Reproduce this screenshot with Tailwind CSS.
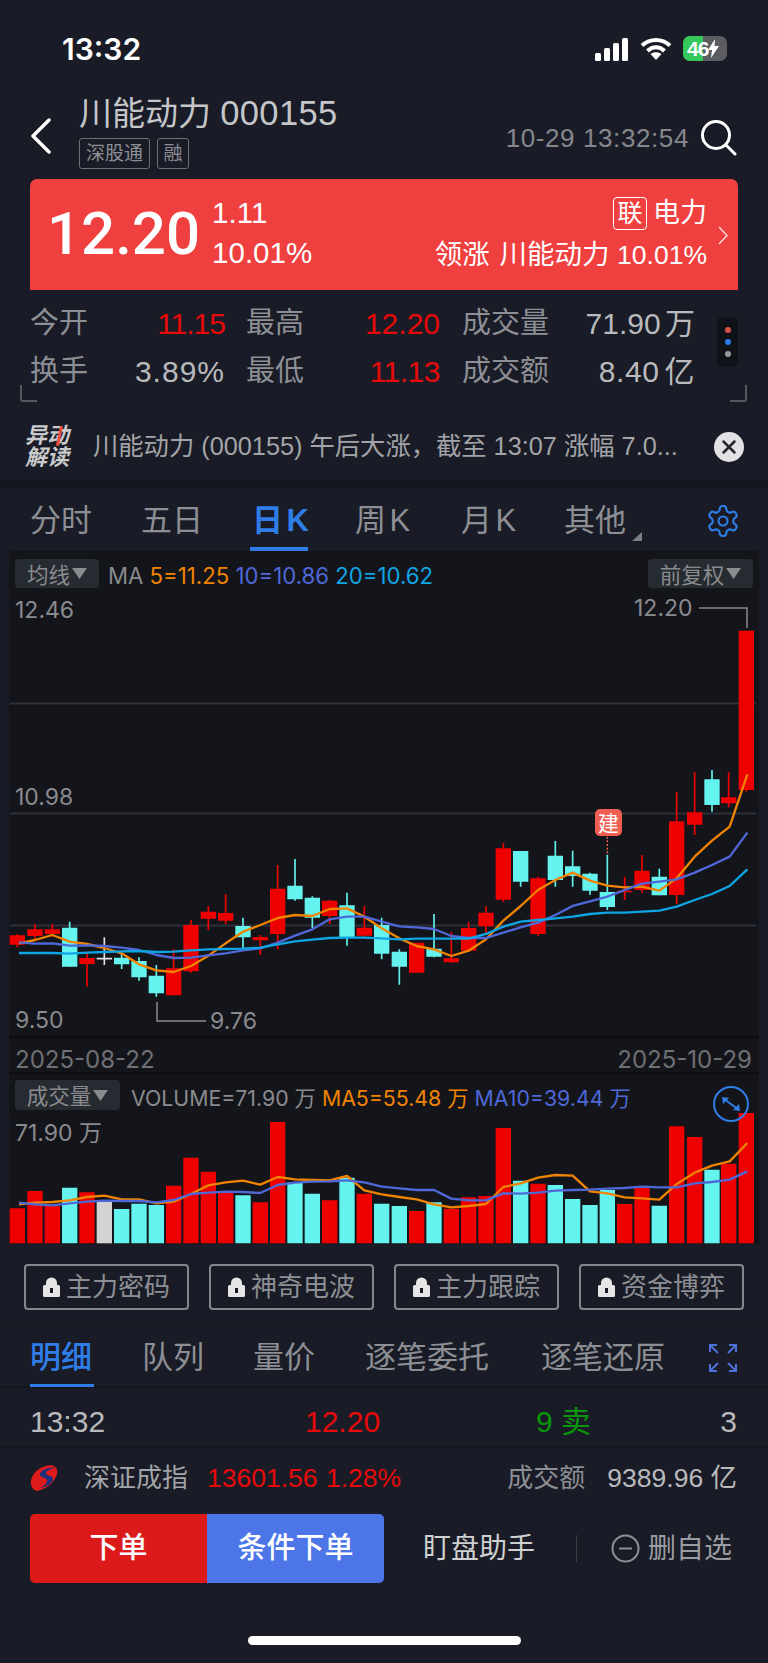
<!DOCTYPE html>
<html lang="zh"><head><meta charset="utf-8">
<script src="https://cdn.jsdelivr.net/npm/@tailwindcss/browser@4"></script>
</head>
<body class="m-0">
<div class="w-[768px] h-[1663px] overflow-hidden bg-[#191c26] text-[#8d8f95] font-['Liberation_Sans','Noto_Sans_CJK_SC',sans-serif] leading-none">

<!-- status bar -->
<div class="h-[92px] relative">
  <span class="absolute left-[62px] top-[33px] text-[30px] leading-[32px] font-semibold text-white font-['Inter','Liberation_Sans',sans-serif]">13:32</span>
  <div class="absolute left-[595px] top-[36px] flex items-center gap-[12px]">
    <svg width="33" height="24" viewBox="0 0 33 24" fill="#fff"><rect x="0" y="16" width="6" height="8" rx="1.5"/><rect x="9" y="11" width="6" height="13" rx="1.5"/><rect x="18" y="6" width="6" height="18" rx="1.5"/><rect x="27" y="1" width="6" height="23" rx="1.5"/></svg>
    <svg width="32" height="24" viewBox="0 0 32 24" fill="none" stroke="#fff" stroke-width="4"><path d="M2 8.5C10 1 22 1 30 8.5"/><path d="M7.500 14C12.500 9 19.500 9 24.500 14"/><path fill="#fff" stroke="none" d="M16 23 10.500 17C13.500 14.500 18.500 14.500 21.500 17Z"/></svg>
    <div class="relative w-[44px] h-[25px] rounded-[7px] bg-[#5b5d62] overflow-hidden ml-[-1px] flex items-center">
      <div class="absolute left-0 top-0 bottom-0 w-[20px] bg-[#34c759]"></div>
      <span class="relative ml-[4px] text-[21px] font-bold text-white tracking-[-1px] font-['Liberation_Sans',sans-serif]">46</span>
      <svg class="relative ml-[0px]" width="11" height="19" viewBox="0 0 11 19" fill="#fff"><path d="M7 0 0 11h4l-1 8 8-12H6.500Z"/></svg>
    </div>
  </div>
</div>

<!-- header -->
<div class="h-[87px] relative flex pl-[30px]">
  <svg class="mt-[26px]" width="22" height="36" viewBox="0 0 22 36" fill="none" stroke="#fff" stroke-width="3.500" stroke-linecap="round" stroke-linejoin="round"><path d="M19 2 3 18l16 16"/></svg>
  <div class="ml-[27px] flex flex-col">
    <div class="text-[33px] leading-[36px] mt-[3px] text-[#c5c6ca] whitespace-nowrap">川能动力 <span class="text-[34.500px] tracking-[.4px]">000155</span></div>
    <div class="flex gap-[7px] mt-[6px]">
      <span class="w-[71px] h-[31px] flex items-center justify-center border border-[#6e7076] rounded-[3px] text-[19px] text-[#8d8f95]">深股通</span>
      <span class="w-[32px] h-[31px] flex items-center justify-center border border-[#6e7076] rounded-[3px] text-[19px] text-[#8d8f95]">融</span>
    </div>
  </div>
  <div class="ml-auto mr-[31px] mt-[28px] flex items-center h-[36px]">
    <span class="text-[26px] tracking-[.6px] text-[#85878d]">10-29 13:32:54</span>
    <svg class="ml-[11px]" width="37" height="36" viewBox="0 0 37 36" fill="none" stroke="#fff" stroke-width="3" stroke-linecap="round"><circle cx="16" cy="15" r="13.500"/><path d="M26 25l9 9"/></svg>
  </div>
</div>

<!-- red price card -->
<div class="mx-[30px] h-[111px] bg-[#ef3f3f] rounded-t-[7px] relative flex text-white">
  <span class="ml-[17px] mt-[23px] text-[60px] leading-[64px] font-medium font-['Roboto',sans-serif]">12.20</span>
  <div class="ml-[12px] mt-[19px] flex flex-col gap-[10px] text-[29.500px] leading-[30px]">
    <span>1.11</span><span>10.01%</span>
  </div>
  <div class="ml-auto mr-[31px] mt-[18px] flex flex-col items-end">
    <div class="flex items-center h-[33px] text-[27px]">
      <span class="w-[34px] h-[33px] flex items-center justify-center border border-white rounded-[4px] mr-[6px] text-[25px]">联</span>电力
    </div>
    <div class="text-[27.500px] leading-[30px] mt-[10px] whitespace-nowrap"><span class="mr-[2px]">领涨</span> 川能动力 <span class="text-[26.500px]">10.01%</span></div>
  </div>
  <svg class="absolute left-[688px] top-[47px]" width="11" height="19" viewBox="0 0 11 19" fill="none" stroke="#fff" stroke-opacity=".8" stroke-width="1.500"><path d="M1 1l8 8.500L1 18"/></svg>
</div>

<!-- stats -->
<div class="relative h-[112px] pt-[10px] pl-[30px] text-[29px]">
  <div class="flex h-[48px] items-center">
    <div class="w-[195px] flex justify-between"><span>今开</span><span class="text-[#e60a0a] text-[30px] tracking-[-1px]">11.15</span></div>
    <div class="w-[194px] ml-[21px] flex justify-between"><span>最高</span><span class="text-[#e60a0a] text-[30px]">12.20</span></div>
    <div class="w-[233px] ml-[22px] flex justify-between"><span>成交量</span><span class="text-[#b9babd] text-[30px] [word-spacing:-4px]">71.90 万</span></div>
  </div>
  <div class="flex h-[48px] items-center">
    <div class="w-[195px] flex justify-between"><span>换手</span><span class="text-[#b9babd] text-[30px] tracking-[1px]">3.89%</span></div>
    <div class="w-[194px] ml-[21px] flex justify-between"><span>最低</span><span class="text-[#e60a0a] text-[30px] tracking-[-.5px]">11.13</span></div>
    <div class="w-[233px] ml-[22px] flex justify-between"><span>成交额</span><span class="text-[#b9babd] text-[30px] [word-spacing:-4px] tracking-[.6px]">8.40 亿</span></div>
  </div>
  <div class="absolute left-[717px] top-[27px] w-[21px] h-[50px] rounded-[5px] bg-[#101219] flex flex-col items-center justify-center gap-[6px]">
    <i class="w-[6px] h-[6px] rounded-full bg-[#d9503f]"></i><i class="w-[6px] h-[6px] rounded-full bg-[#2f7be8]"></i><i class="w-[6px] h-[6px] rounded-full bg-[#9a9a9a]"></i>
  </div>
  <div class="absolute left-[20px] top-[95px] w-[17px] h-[17px] border-l-2 border-b-2 border-[#56585f] rounded-bl-[3px]"></div>
  <div class="absolute left-[730px] top-[95px] w-[17px] h-[17px] border-r-2 border-b-2 border-[#56585f] rounded-br-[3px]"></div>
</div>

<!-- news strip -->
<div class="h-[78px] flex items-center pl-[25px] pt-[12px] relative">
  <div class="w-[48px] relative text-[22px] leading-[22px] font-bold italic text-[#c9cacc] flex flex-col whitespace-nowrap">
    <span>异动</span><span>解读</span>
    <i class="absolute left-[33px] top-[1px] w-[3px] h-[20px] bg-[#ef4b3f] rotate-[12deg]"></i>
  </div>
  <span class="ml-[20px] text-[25.300px] text-[#a3a4a8] whitespace-nowrap">川能动力 (000155) 午后大涨，截至 13:07 涨幅 7.0...</span>
  <svg class="absolute left-[714px] top-[30px]" width="30" height="30" viewBox="0 0 30 30"><circle cx="15" cy="15" r="15" fill="#e2e2e4"/><path d="M9.500 9.500l11 11M20.500 9.500l-11 11" stroke="#24262d" stroke-width="2.500" stroke-linecap="round"/></svg>
</div>
<div class="h-[8px] bg-[#14161d]"></div>

<!-- period tabs -->
<div class="h-[63px] relative flex items-center text-[31px] [word-spacing:-5px]">
  <span class="absolute left-[30px] top-[17px]">分时</span>
  <span class="absolute left-[141px] top-[17px]">五日</span>
  <span class="absolute left-[252px] top-[17px] text-[#2f7de6] font-bold">日 K</span>
  <i class="absolute left-[250px] top-[59px] w-[58px] h-[4px] bg-[#2f7de6]"></i>
  <span class="absolute left-[355px] top-[17px]">周 K</span>
  <span class="absolute left-[461px] top-[17px]">月 K</span>
  <span class="absolute left-[564px] top-[17px]">其他</span>
  <svg class="absolute left-[632px] top-[44px]" width="10" height="9" viewBox="0 0 10 9" fill="#7c7e84"><path d="M10 0v9H0Z"/></svg>
  <svg class="absolute left-[705px] top-[15px]" width="36" height="36" viewBox="0 0 24 24" fill="none" stroke="#2f7de6" stroke-width="1.400" stroke-linecap="round" stroke-linejoin="round"><path d="M12.220 2h-.44a2 2 0 0 0-2 2v.18a2 2 0 0 1-1 1.730l-.43.25a2 2 0 0 1-2 0l-.15-.08a2 2 0 0 0-2.730.73l-.22.38a2 2 0 0 0 .73 2.730l.15.1a2 2 0 0 1 1 1.720v.51a2 2 0 0 1-1 1.740l-.15.09a2 2 0 0 0-.73 2.730l.22.38a2 2 0 0 0 2.730.73l.15-.08a2 2 0 0 1 2 0l.43.25a2 2 0 0 1 1 1.730V20a2 2 0 0 0 2 2h.44a2 2 0 0 0 2-2v-.18a2 2 0 0 1 1-1.730l.43-.25a2 2 0 0 1 2 0l.15.08a2 2 0 0 0 2.730-.73l.22-.39a2 2 0 0 0-.73-2.730l-.15-.08a2 2 0 0 1-1-1.740v-.5a2 2 0 0 1 1-1.740l.15-.09a2 2 0 0 0 .73-2.730l-.22-.38a2 2 0 0 0-2.730-.73l-.15.08a2 2 0 0 1-2 0l-.43-.25a2 2 0 0 1-1-1.730V4a2 2 0 0 0-2-2z"/><circle cx="12" cy="12" r="3"/></svg>
</div>

<!-- chart panel -->
<div class="relative ml-[9px] w-[750px] h-[693px] bg-[#14151b] font-['Inter','Liberation_Sans','Noto_Sans_CJK_SC',sans-serif] text-[23px] text-[#8a8b8e]">
  <svg class="absolute left-0 top-0" width="750" height="693" viewBox="9 551 750 693" fill="none">
    <path d="M10 703.500H756M10 813.500H756M10 925.500H756" stroke="#2e303a" stroke-width="2"/>
    <path d="M9 1037H759M9 1073H759" stroke="#0c0d11" stroke-width="2"/>
    <path d="M157 1002V1021H206" stroke="#8a8b8e" stroke-width="1.500"/>
    <path d="M699 608H747V628" stroke="#8a8b8e" stroke-width="1.500"/>
    <g transform="translate(0 780) scale(.33333)">
      <path stroke="#ee0000" stroke-width="5" d="M52 462V502M105 432V480M157 432V470M261 520V620M521 508V646M573 420V578M625 378V450M677 343V432M781 465V525M833 255V508M989 360V432M1093 378V470"/>
      <path stroke="#ee0000" stroke-width="46" d="M52 466V494M105 448V468M157 448V462M261 534V552M521 565V646M573 435V574M625 395V416M677 399V422M781 471V481M833 326V462M989 362V408M1093 443V467"/>
      <path stroke="#64f3ef" stroke-width="5" d="M209 425V560M365 520V567M417 532V602M469 555V650M729 413V505M885 237V362M937 349V445M1041 338V497M1145 413V538"/>
      <path stroke="#64f3ef" stroke-width="46" d="M209 443V560M365 533V553M417 543V592M469 587V640M729 438V472M885 317V358M937 353V413M1041 376V472M1145 435V521"/>
      <path stroke="#e0e0e0" stroke-width="5" d="M313 472V555M290 536H336"/>
      <path stroke="#f08400" stroke-width="7" stroke-linejoin="round" d="M57 490 105 480 157 465 209 485 261 492 313 504 365 520 417 553 469 571 521 576 573 558 625 527 677 490 729 455 781 435 833 414 885 405 937 408 989 387 1041 385 1093 410 1145 445"/>
      <path stroke="#4f68d8" stroke-width="7" stroke-linejoin="round" d="M57 487 105 491 157 490 209 497 261 496 313 498 365 503 417 510 469 525 521 534 573 533 625 526 677 520 729 511 781 505 833 488 885 467 937 448 989 418 1041 410 1093 410 1145 425"/>
      <path stroke="#0ea5e4" stroke-width="7" stroke-linejoin="round" d="M57 519 105 519 157 519 209 521 261 518 313 516 365 514 417 513 469 516 521 515 573 511 625 508 677 507 729 506 781 503 833 493 885 484 937 479 989 474 1041 473 1093 473 1145 475"/>
    </g>
    <g transform="translate(384 600) scale(.33333)">
      <path stroke="#ee0000" stroke-width="5" d="M202 996V1088M254 966V1056M306 918V1000M358 730V906M462 830V1008M722 830V900M774 765V878M878 576V912M932 517V705M1034 517V622M1087 92V575"/>
      <path stroke="#ee0000" stroke-width="46" d="M98 1028V1118M202 1075V1087M254 984V1052M306 938V979M358 745V899M462 835V1002M722 872V877M774 812V870M878 664V885M932 637V674M1034 592V610M1087 92V570"/>
      <path stroke="#64f3ef" stroke-width="5" d="M46 1048V1154M150 942V1072M410 753V860M514 723V860M566 752V860M618 818V884M670 764V930M826 806V886M984 510V635"/>
      <path stroke="#64f3ef" stroke-width="46" d="M46 1055V1100M150 1046V1070M410 753V845M514 767V840M566 799V828M618 821V872M670 876V921M826 830V886M984 538V615"/>
      <path stroke="#ef5e50" stroke-width="4" stroke-dasharray="6 5" d="M670 710V762"/>
      <path stroke="#f08400" stroke-width="7" stroke-linejoin="round" d="M-7 985 46 1015 98 1038 150 1048 202 1068 254 1052 306 1018 358 962 410 918 462 870 514 840 566 818 618 842 670 857 722 862 774 860 826 872 878 835 932 770 984 722 1037 680 1090 523"/>
      <path stroke="#4f68d8" stroke-width="7" stroke-linejoin="round" d="M-7 965 46 979 98 982 150 987 202 1008 254 1014 306 1014 358 998 410 982 462 968 514 945 566 918 618 904 670 890 722 870 774 851 826 845 878 838 932 818 984 795 1037 770 1090 698"/>
      <path stroke="#0ea5e4" stroke-width="7" stroke-linejoin="round" d="M-7 1015 46 1018 98 1016 150 1016 202 1016 254 1016 306 1002 358 980 410 965 462 960 514 955 566 950 618 942 670 938 722 938 774 935 826 932 878 920 932 900 984 882 1037 858 1090 808"/>
    </g>
    <g transform="translate(0 1040) scale(.33333)">
      <path stroke="#ee0000" stroke-width="46" d="M52 505V610M105 453V610M157 497V610M261 457V610M521 437V610M573 353V610M625 395V610M677 457V610M781 487V610M833 246V610M989 481V610M1093 461V610"/>
      <path stroke="#64f3ef" stroke-width="46" d="M209 443V610M365 507V610M417 491V610M469 495V610M729 466V610M885 427V610M937 461V610M1041 413V610M1145 491V610"/>
      <path stroke="#d2d2d2" stroke-width="46" d="M313 485V610"/>
      <path stroke="#f08400" stroke-width="7" stroke-linejoin="round" d="M57 493 105 488 157 486 209 481 261 471 313 467 365 478 417 478 469 490 521 485 573 462 625 436 677 427 729 422 781 434 833 411 885 418 937 420 989 421 1041 408 1093 451 1145 463"/>
      <path stroke="#4f68d8" stroke-width="7" stroke-linejoin="round" d="M57 488 105 493 157 496 209 490 261 485 313 482 365 483 417 483 469 487 521 480 573 462 625 458 677 455 729 456 781 459 833 435 885 428 937 425 989 424 1041 421 1093 427 1145 440"/>
    </g>
    <g transform="translate(384 1040) scale(.33333)">
      <path stroke="#ee0000" stroke-width="46" d="M98 513V610M202 506V610M254 472V610M306 468V610M358 264V610M462 431V610M722 492V610M774 443V610M878 259V610M932 291V610M1034 371V610M1087 219V610"/>
      <path stroke="#64f3ef" stroke-width="46" d="M46 498V610M150 487V610M410 422V610M514 435V610M566 477V610M618 495V610M670 450V610M826 497V610M984 389V610"/>
      <path stroke="#f08400" stroke-width="7" stroke-linejoin="round" d="M-7 463 46 471 98 478 150 493 202 502 254 498 306 492 358 441 410 430 462 413 514 405 566 407 618 454 670 460 722 472 774 475 826 479 878 432 932 398 984 377 1037 364 1090 309"/>
      <path stroke="#4f68d8" stroke-width="7" stroke-linejoin="round" d="M-7 440 46 445 98 450 150 450 202 476 254 481 306 481 358 460 410 461 462 458 514 452 566 450 618 449 670 446 722 444 774 440 826 442 878 442 932 430 984 426 1037 419 1090 394"/>
    </g>
    <circle cx="731" cy="1104" r="17" stroke="#2f7de6" stroke-width="2"/>
    <path d="M722 1097l7 1-6 6Zm18 14-7-1 6-6Z" fill="#2f7de6"/>
    <path d="M724 1099l15 11" stroke="#2f7de6" stroke-width="2"/>
  </svg>

  <div class="absolute left-[6px] top-[8px] w-[84px] h-[29px] rounded-[4px] bg-[#262a31] flex items-center justify-center gap-[2px] text-[21.500px] text-[#8a8b8e] font-['Noto_Sans_CJK_SC',sans-serif]">均线<svg width="15" height="11" viewBox="0 0 15 11" fill="#8a8b8e"><path d="M0 0h15L7.500 11Z"/></svg></div>
  <div class="absolute left-[99px] top-[13px] text-[22.200px] leading-[24px] whitespace-nowrap">MA <span class="text-[#f08400]">5=11.25</span> <span class="text-[#4f68d8]">10=10.86</span> <span class="text-[#0ea5e4]">20=10.62</span></div>
  <div class="absolute left-[639px] top-[8px] w-[105px] h-[29px] rounded-[4px] bg-[#262a31] flex items-center justify-center gap-[2px] text-[21.500px] text-[#8a8b8e] font-['Noto_Sans_CJK_SC',sans-serif]">前复权<svg width="15" height="11" viewBox="0 0 15 11" fill="#8a8b8e"><path d="M0 0h15L7.500 11Z"/></svg></div>
  <span class="absolute left-[6px] top-[47px] leading-[24px]">12.46</span>
  <span class="absolute left-[625px] top-[45px] leading-[24px]">12.20</span>
  <span class="absolute left-[6px] top-[234px] leading-[24px]">10.98</span>
  <span class="absolute left-[6px] top-[457px] leading-[24px]">9.50</span>
  <span class="absolute left-[201px] top-[458px] leading-[24px]">9.76</span>
  <span class="absolute left-[586px] top-[258px] w-[27px] h-[27px] rounded-[5px] bg-[#ef5e50] flex items-center justify-center text-[21px] text-white font-['Noto_Sans_CJK_SC',sans-serif]">建</span>
  <span class="absolute left-[6px] top-[497px] leading-[24px] text-[24px] text-[#6f7073]">2025-08-22</span>
  <span class="absolute right-[7px] top-[497px] leading-[24px] text-[24px] text-[#6f7073]">2025-10-29</span>
  <div class="absolute left-[6px] top-[529px] w-[105px] h-[30px] rounded-[4px] bg-[#262a31] flex items-center justify-center gap-[2px] text-[21.500px] text-[#8a8b8e] font-['Noto_Sans_CJK_SC',sans-serif]">成交量<svg width="15" height="11" viewBox="0 0 15 11" fill="#8a8b8e"><path d="M0 0h15L7.500 11Z"/></svg></div>
  <div class="absolute left-[122px] top-[535px] text-[21.300px] leading-[24px] whitespace-nowrap">VOLUME=71.90 万 <span class="text-[#f08400]">MA5=55.48 万</span> <span class="text-[#4f68d8]">MA10=39.44 万</span></div>
  <span class="absolute left-[6px] top-[570px] leading-[24px]">71.90 万</span>
</div>

<!-- lock buttons -->
<div class="h-[81px] pt-[20px] pl-[24px] flex gap-[20px] text-[26px] border-b border-[#15171f]">
  <div class="w-[165px] h-[46px] border-2 border-[#85878d] rounded-[4px] flex items-center pl-[17px]"><svg width="17" height="20" viewBox="0 0 17 20" fill="#e6e6e6"><path d="M3 8V6a5.500 5.500 0 0 1 11 0v2h1.500A1.500 1.500 0 0 1 17 9.500V18.500A1.500 1.500 0 0 1 15.500 20H1.500A1.500 1.500 0 0 1 0 18.500V9.500A1.500 1.500 0 0 1 1.500 8Z"/><rect x="7" y="11" width="3" height="5" fill="#191c26"/></svg><span class="ml-[6px]">主力密码</span></div>
  <div class="w-[165px] h-[46px] border-2 border-[#85878d] rounded-[4px] flex items-center pl-[17px]"><svg width="17" height="20" viewBox="0 0 17 20" fill="#e6e6e6"><path d="M3 8V6a5.500 5.500 0 0 1 11 0v2h1.500A1.500 1.500 0 0 1 17 9.500V18.500A1.500 1.500 0 0 1 15.500 20H1.500A1.500 1.500 0 0 1 0 18.500V9.500A1.500 1.500 0 0 1 1.500 8Z"/><rect x="7" y="11" width="3" height="5" fill="#191c26"/></svg><span class="ml-[6px]">神奇电波</span></div>
  <div class="w-[165px] h-[46px] border-2 border-[#85878d] rounded-[4px] flex items-center pl-[17px]"><svg width="17" height="20" viewBox="0 0 17 20" fill="#e6e6e6"><path d="M3 8V6a5.500 5.500 0 0 1 11 0v2h1.500A1.500 1.500 0 0 1 17 9.500V18.500A1.500 1.500 0 0 1 15.500 20H1.500A1.500 1.500 0 0 1 0 18.500V9.500A1.500 1.500 0 0 1 1.500 8Z"/><rect x="7" y="11" width="3" height="5" fill="#191c26"/></svg><span class="ml-[6px]">主力跟踪</span></div>
  <div class="w-[165px] h-[46px] border-2 border-[#85878d] rounded-[4px] flex items-center pl-[17px]"><svg width="17" height="20" viewBox="0 0 17 20" fill="#e6e6e6"><path d="M3 8V6a5.500 5.500 0 0 1 11 0v2h1.500A1.500 1.500 0 0 1 17 9.500V18.500A1.500 1.500 0 0 1 15.500 20H1.500A1.500 1.500 0 0 1 0 18.500V9.500A1.500 1.500 0 0 1 1.500 8Z"/><rect x="7" y="11" width="3" height="5" fill="#191c26"/></svg><span class="ml-[6px]">资金博弈</span></div>
</div>

<!-- detail tabs -->
<div class="h-[63px] relative text-[31px] border-b-2 border-[#14161d]">
  <span class="absolute left-[30px] top-[17px] text-[#2f7de6] font-medium">明细</span>
  <i class="absolute left-[30px] top-[59px] w-[64px] h-[3px] bg-[#2f7de6]"></i>
  <span class="absolute left-[142px] top-[17px]">队列</span>
  <span class="absolute left-[253px] top-[17px]">量价</span>
  <span class="absolute left-[365px] top-[17px]">逐笔委托</span>
  <span class="absolute left-[541px] top-[17px]">逐笔还原</span>
  <svg class="absolute left-[709px] top-[19px]" width="28" height="28" viewBox="0 0 28 28" fill="none" stroke="#4c6fdc" stroke-width="2"><path d="M1 8V1h7M1 1l8 8M27 8V1h-7M27 1l-8 8M1 20v7h7M1 27l8-8M27 20v7h-7M27 27l-8-8"/></svg>
</div>

<!-- tick row -->
<div class="h-[60px] relative text-[30px] border-b-2 border-[#14161d] text-[#b9babd]">
  <span class="absolute left-[30px] top-[19px]">13:32</span>
  <span class="absolute left-[305px] top-[19px] text-[#e60a0a]">12.20</span>
  <span class="absolute left-[536px] top-[19px] text-[#0a960a]">9 卖</span>
  <span class="absolute right-[31px] top-[19px]">3</span>
</div>

<!-- index row -->
<div class="h-[60px] flex items-center pl-[30px] pr-[31px] text-[26px]">
  <svg width="28" height="26" viewBox="0 0 28 26"><path d="M21 0C12 1 3 6 1 15c-1 6 2 10 6 11C14 24 24 20 27 9 28 4 26 1 21 0Z" fill="#e01b1b"/><path d="M25 3C18 2 11 5 10 9c-1 4 6 3 7 6 1 3-3 6-7 8 7-1 13-5 13-9 0-4-7-3-7-6 0-2 4-4 9-5Z" fill="#1d2f7a"/></svg>
  <span class="ml-[26px] text-[#a3a4a8]">深证成指</span>
  <span class="ml-[19px] text-[#e60a0a] text-[26.500px] [word-spacing:1px]">13601.56 1.28%</span>
  <span class="ml-auto">成交额</span>
  <span class="ml-[22px] text-[#b9babd] text-[26.500px]">9389.96 亿</span>
</div>

<!-- action bar -->
<div class="flex items-center ml-[30px] mt-[6px] h-[69px]">
  <div class="w-[177px] h-[69px] bg-[#dc1a1a] rounded-l-[5px] flex items-center justify-center text-white text-[29px] font-medium">下单</div>
  <div class="w-[177px] h-[69px] bg-[#4c76e8] rounded-r-[5px] flex items-center justify-center text-white text-[29px] font-medium">条件下单</div>
  <span class="ml-[39px] text-[28px] text-[#cfd0d2]">盯盘助手</span>
  <i class="ml-[41px] w-[1px] h-[27px] bg-[#3a3c44]"></i>
  <svg class="ml-[34px]" width="29" height="29" viewBox="0 0 29 29" fill="none" stroke="#8d8f95" stroke-width="2"><circle cx="14.500" cy="14.500" r="13"/><path d="M8 14.500h13"/></svg>
  <span class="ml-[8px] text-[28px] text-[#9a9ba0]">删自选</span>
</div>

<div class="mt-[53px] ml-[248px] w-[273px] h-[9px] bg-white rounded-full"></div>
</div>
</body></html>
